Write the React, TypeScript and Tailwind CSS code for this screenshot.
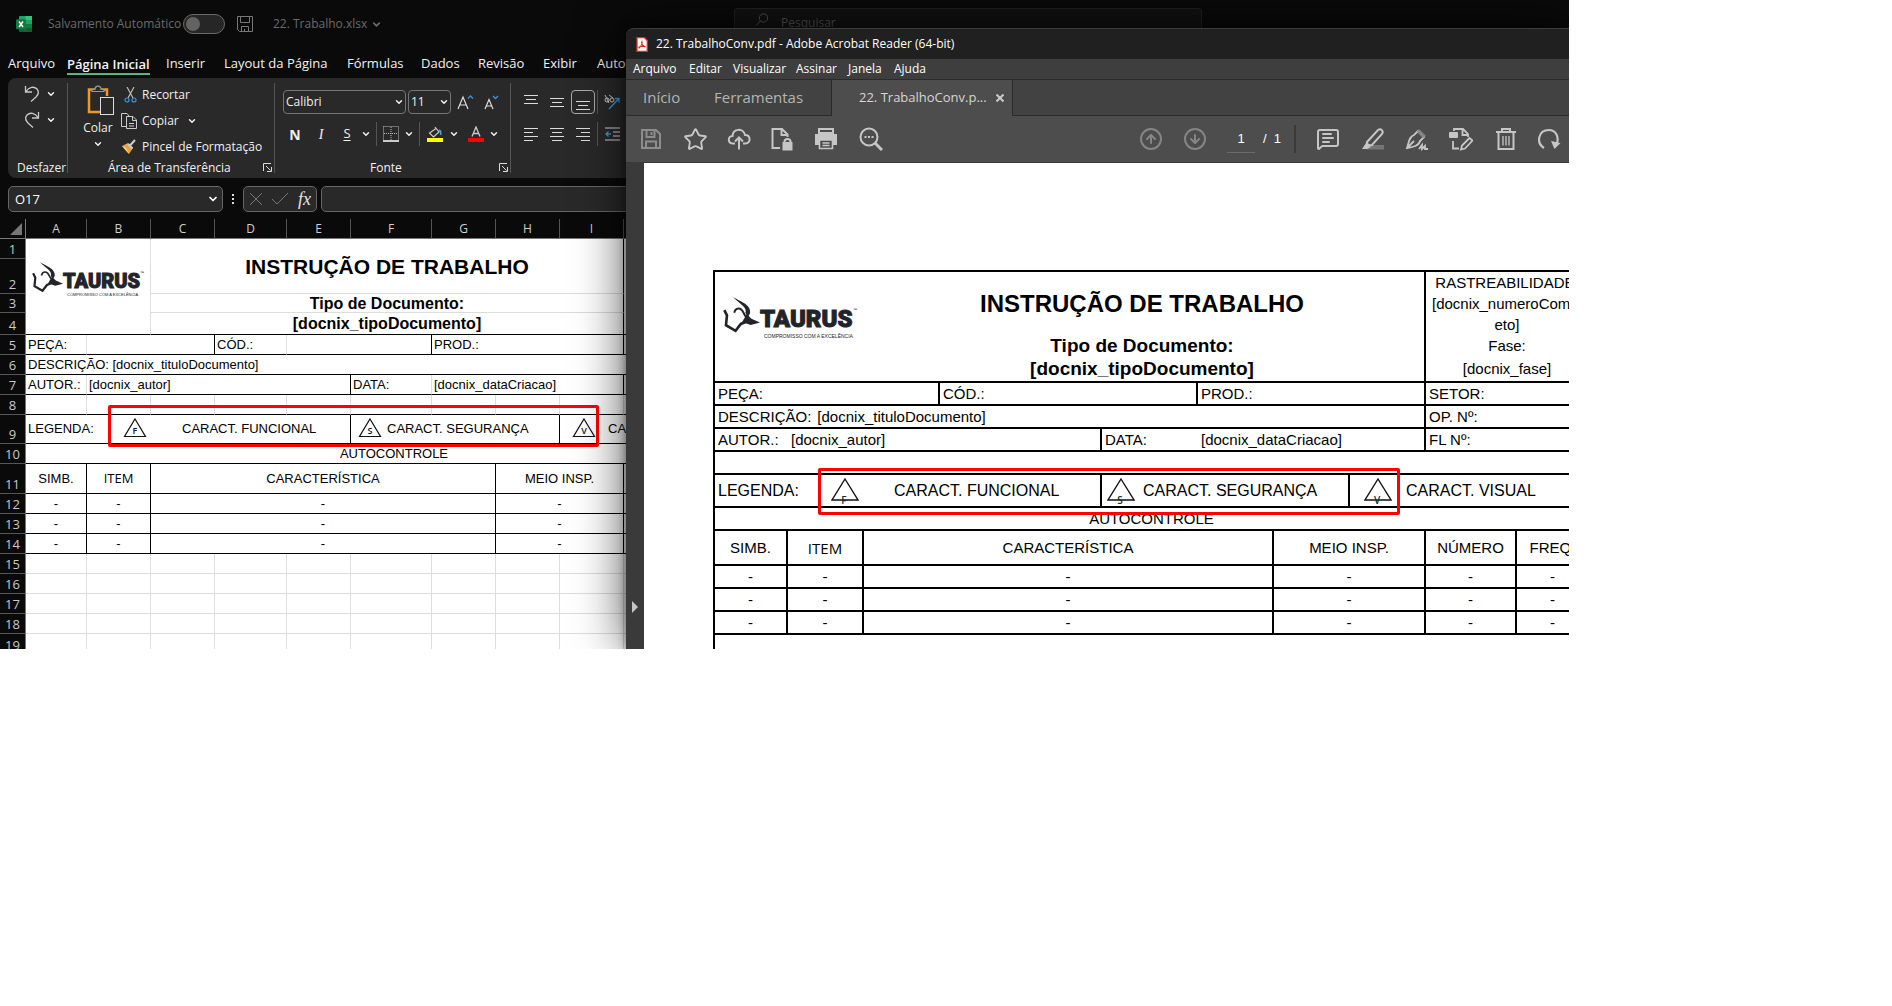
import React from "react";
import { ChevronDown, Star, MessageSquareText, ArrowUpCircle, ArrowDownCircle } from "lucide-react";

const light = "border-[#dcdcdc]";

function Chev({ size = 10, className = "" }: { size?: number; className?: string }) {
  return <ChevronDown size={size} strokeWidth={3.5} className={className} aria-hidden="true" />;
}

/* ---------- shared drawings ---------- */

function Bull({ className }: { className: string }) {
  return (
    <svg viewBox="0 0 112 114" className={className} fill="none" stroke="#23232a" aria-hidden="true">
      <path d="M28 1 C50 16 86 24 82 52 L76 62 L68 52 C74 34 54 26 28 1Z" fill="#23232a" stroke="none" />
      <path d="M34 50 C38 34 54 32 62 50 C66 62 78 72 96 78" strokeWidth="6" />
      <path d="M4 42 L12 58 L9 88 L38 105 L54 84 L76 75" strokeWidth="8" />
      <path d="M72 54 L86 68 L112 80 L84 87 L58 78Z" fill="#23232a" stroke="none" />
    </svg>
  );
}

function Logo({ large = false }: { large?: boolean }) {
  return (
    <div className={large ? "flex items-start pt-6 pl-2" : "flex items-start pl-[6px]"}>
      <Bull className={large ? "h-[38px] w-[37px] shrink-0" : "h-[33px] w-[31px] shrink-0"} />
      <div className={large ? "pt-[10px]" : "pt-[9px]"}>
        <div
          className={
            large
              ? "font-['Roboto'] text-[24px] leading-[26px] font-black text-[#23232a] [-webkit-text-stroke:1px_#23232a]"
              : "font-['Roboto'] text-[20px] leading-[22px] font-black text-[#23232a] [-webkit-text-stroke:1px_#23232a]"
          }
        >
          TAURUS
        </div>
        <div
          className={
            large
              ? "pl-1 text-[5px] leading-[8px] whitespace-nowrap text-[#23232a]"
              : "pl-1 text-[4px] leading-[6px] whitespace-nowrap text-[#23232a]"
          }
        >
          COMPROMISSO COM A EXCELÊNCIA
        </div>
      </div>
      <div className={large ? "pt-3 text-[4px] leading-[4px]" : "pt-[10px] text-[4px] leading-[4px]"}>™</div>
    </div>
  );
}

function Tri({ letter, low = false }: { letter: string; low?: boolean }) {
  return low ? (
    <svg viewBox="0 0 28 28" className="h-7 w-7 shrink-0" role="img" aria-label={letter}>
      <path d="M14 2 L27 23 H1Z" fill="none" stroke="#111" strokeWidth="1.4" />
      <text x="13" y="27" textAnchor="middle" fontSize="10" fontWeight="600" fontFamily="Open Sans, sans-serif" fill="#02302c">{letter}</text>
    </svg>
  ) : (
    <svg viewBox="0 0 24 22" className="h-[22px] w-6 shrink-0" role="img" aria-label={letter}>
      <path d="M12 2 L22.5 19.5 H1.5Z" fill="none" stroke="#111" strokeWidth="1.2" />
      <text x="12" y="17" textAnchor="middle" fontSize="9" fontWeight="600" fontFamily="Open Sans, sans-serif" fill="#111">{letter}</text>
    </svg>
  );
}

/* ---------- spreadsheet window ---------- */

function ExcelIcon() {
  return (
    <svg viewBox="0 0 16 16" className="h-4 w-4" aria-hidden="true">
      <rect x="3" y="0" width="13" height="16" rx="1" fill="#21a366" />
      <rect x="9.500" y="0" width="6.500" height="4" fill="#33c481" />
      <rect x="3" y="4" width="6.500" height="4" fill="#107c41" />
      <rect x="3" y="8" width="6.500" height="8" fill="#185c37" />
      <rect x="9.500" y="8" width="6.500" height="4" fill="#107c41" />
      <rect x="9.500" y="12" width="6.500" height="4" fill="#185c37" />
      <rect x="0" y="3.200" width="10" height="10" rx="1" fill="#107c41" />
      <path d="M3 5.500 L7 11 M7 5.500 L3 11" stroke="#fff" strokeWidth="1.500" />
    </svg>
  );
}

function TitleBar() {
  return (
    <div className="flex h-12 items-center pl-4 text-[12px] text-[#6a6a6a]">
      <ExcelIcon />
      <label htmlFor="autosave" className="ml-4 w-[135px] whitespace-nowrap">Salvamento Automático</label>
      <span className="relative flex h-5 w-[42px] items-center">
        <input id="autosave" type="checkbox" role="switch" className="h-5 w-[42px] appearance-none rounded-full border border-[#6a6a6a] bg-[#262626]" />
        <span className="pointer-events-none absolute left-[3px] h-[14px] w-[14px] rounded-full bg-[#636363]" />
      </span>
      <button aria-label="Salvar" className="ml-3">
        <svg viewBox="0 0 16 16" className="h-4 w-4" fill="none" stroke="#777" aria-hidden="true">
          <path d="M.5 .5 H15.5 V15.5 H2.500 L.5 13.500Z M3.500 .5 V6.500 H12.500 V.5 M4.500 15.500 V10.500 H11.500 V15.500 M7.500 13 V15.500" />
        </svg>
      </button>
      <button className="ml-5 flex w-[107px] shrink-0 items-center gap-1 whitespace-nowrap">
        22. Trabalho.xlsx
        <Chev size={11} className="shrink-0" />
      </button>
      <div className="ml-[354px] flex h-10 w-[468px] items-center gap-3 self-end rounded-t border border-[#222] bg-[#121212] pl-5 text-[#525252]">
        <svg viewBox="0 0 14 14" className="-mt-4 h-[14px] w-[14px]" fill="none" stroke="currentColor" aria-hidden="true">
          <circle cx="8.500" cy="5" r="4.200" /><path d="M5.300 8 L.8 12.800" />
        </svg>
        <label htmlFor="search" className="sr-only">Pesquisar</label>
        <input id="search" placeholder="Pesquisar" className="-mt-[10px] w-40 bg-transparent text-[12px] outline-none placeholder:text-[#525252]" />
      </div>
    </div>
  );
}

const tabs: [string, string][] = [
  ["Arquivo", "w-[59px]"],
  ["Página Inicial", "w-[99px] font-semibold"],
  ["Inserir", "w-[58px]"],
  ["Layout da Página", "w-[123px]"],
  ["Fórmulas", "w-[74px]"],
  ["Dados", "w-[57px]"],
  ["Revisão", "w-[65px]"],
  ["Exibir", "w-[54px]"],
  ["Automatizar", "w-[90px]"],
];

function Tabs() {
  return (
    <nav className="flex h-[30px] items-start pl-2 text-[13px] leading-[18px] text-[#f2f2f2]">
      {tabs.map(([t, w], i) => (
        <div key={t} className={"shrink-0 pt-[6px] " + w}>
          <button className={i === 1 ? "block h-[21px] border-b-2 border-[#57b586] whitespace-nowrap" : "block whitespace-nowrap"}>{t}</button>
        </div>
      ))}
    </nav>
  );
}

function Undo({ flip = false }: { flip?: boolean }) {
  return (
    <svg viewBox="0 0 16 18" className={flip ? "h-[18px] w-4 -scale-x-100" : "h-[18px] w-4"} fill="none" stroke="#c8c8c8" strokeWidth="1.300" aria-hidden="true">
      <path d="M1.500 1 V7 H8 M2 6.500 C5 2 10 1 13 4 C15.500 7 14.500 9.500 12 12 L7 16.500" />
    </svg>
  );
}

function Launcher() {
  return (
    <button aria-label="Mais opções" className="h-[9px] w-[9px]">
      <svg viewBox="0 0 9 9" className="h-[9px] w-[9px]" fill="none" stroke="#ddd" aria-hidden="true">
        <path d="M.5 8 V.5 H8 M3 3 L7.500 7.500 M8.500 4 V8.500 H4" />
      </svg>
    </button>
  );
}

function Lines({ rows, box = false }: { rows: [number, number, number][]; box?: boolean }) {
  return (
    <button aria-label="Alinhamento" className={box ? "flex h-6 w-6 items-center justify-center rounded border border-[#aaa]" : "flex h-6 w-6 items-center justify-center"}>
      <svg viewBox="0 0 14 16" className="h-4 w-[14px]" stroke="#ddd" aria-hidden="true">
        {rows.map(([x1, x2, y]) => <path key={y} d={`M${x1} ${y} H${x2}`} />)}
      </svg>
    </button>
  );
}

function Ribbon() {
  return (
    <div className="ml-2 flex h-[100px] overflow-hidden rounded-l-lg bg-[#292929] pt-[5px] pb-[5px] text-[12px] text-[#f0f0f0]">
      <section className="flex w-[60px] shrink-0 flex-col border-r border-[#555] pl-4">
        <button aria-label="Desfazer" className="mt-[2px] flex h-[18px] items-center gap-[6px]"><Undo /><Chev /></button>
        <button aria-label="Refazer" className="mt-2 flex h-[18px] items-center gap-[6px]"><Undo flip /><Chev /></button>
        <div className="mt-auto -ml-[7px] leading-[11px]">Desfazer</div>
      </section>

      <section className="flex w-[207px] shrink-0 flex-col border-r border-[#555]">
        <div className="flex pl-[14px]">
          <button className="flex w-8 flex-col items-center leading-4">
            <svg viewBox="0 0 28 31" className="mt-[2px] ml-[6px] h-[31px] w-7" fill="none" aria-hidden="true">
              <path d="M8 4.500 H2 V27 H13 M14 4.500 H20 V11" stroke="#e99a2b" strokeWidth="2.500" />
              <path d="M5 6.500 V4.500 H8 C8 0 14 0 14 4.500 H17 V6.500Z" stroke="#999" strokeWidth="1.200" fill="#292929" />
              <rect x="13.500" y="12.500" width="13" height="17" stroke="#ddd" fill="#292929" />
            </svg>
            <span className="mt-1">Colar</span>
            <Chev className="mt-[3px]" />
          </button>
          <div className="ml-[7px] flex flex-col gap-2">
            <button className="mt-[3px] flex h-[18px] items-center gap-[5px] whitespace-nowrap">
              <svg viewBox="0 0 16 16" className="h-4 w-4" fill="none" aria-hidden="true">
                <path d="M6 0 L12 11 M13 0 L7 11" stroke="#bbb" strokeWidth="1.200" />
                <circle cx="6" cy="13" r="2" stroke="#3a96dd" strokeWidth="1.200" /><circle cx="13" cy="13" r="2" stroke="#3a96dd" strokeWidth="1.200" />
              </svg>
              Recortar
            </button>
            <button className="flex h-[18px] items-center gap-[5px] whitespace-nowrap">
              <svg viewBox="0 0 16 16" className="h-4 w-4" fill="none" stroke="#ccc" aria-hidden="true">
                <path d="M5.500 13.500 H.5 V.5 H6 L8 3 M5.500 3.500 H12 L15.500 7 V15.500 H5.500Z M11.500 3.500 V7.500 H15.500 M8 10.500 H13 M8 13 H13" />
              </svg>
              <span className="w-10 text-left">Copiar</span><Chev />
            </button>
            <button className="flex h-[18px] items-center gap-[5px] whitespace-nowrap">
              <svg viewBox="0 0 16 16" className="h-4 w-4" aria-hidden="true">
                <path d="M1 7 L7 4 L12 9 L8 15Z" fill="#e8a33d" /><path d="M1 7 L5 9 L8 15Z" fill="#ffd894" />
                <path d="M7 5 L11.500 9.500 M9 6.500 L14 1" stroke="#ccc" strokeWidth="2" />
              </svg>
              Pincel de Formatação
            </button>
          </div>
        </div>
        <div className="mt-auto flex items-center pl-10 leading-[11px]"><span className="w-[155px]">Área de Transferência</span><Launcher /></div>
      </section>

      <section className="flex w-[236px] shrink-0 flex-col border-r border-[#555]">
        <div className="mt-[7px] flex h-6 pl-2">
          <span className="relative flex w-[123px] items-center">
            <select aria-label="Fonte" className="h-6 w-full appearance-none rounded border border-[#757575] pl-[2px]"><option>Calibri</option></select>
            <Chev className="pointer-events-none absolute right-[2px]" />
          </span>
          <span className="relative ml-[2px] flex w-[43px] items-center">
            <select aria-label="Tamanho" className="h-6 w-full appearance-none rounded border border-[#757575] pl-[2px]"><option>11</option></select>
            <Chev className="pointer-events-none absolute right-[2px]" />
          </span>
          <button aria-label="Aumentar fonte" className="ml-[6px] w-[17px]">
            <svg viewBox="0 0 17 16" className="h-4 w-[17px]" fill="none" stroke="#ddd" aria-hidden="true"><path d="M1 15 L6 3 L11 15 M3 11 H9" strokeWidth="1.200" /><path d="M11 4.500 L13.500 2 L16 4.500" stroke="#3a96dd" strokeWidth="1.300" /></svg>
          </button>
          <button aria-label="Diminuir fonte" className="ml-[9px] w-[17px]">
            <svg viewBox="0 0 17 16" className="h-4 w-[17px]" fill="none" stroke="#ddd" aria-hidden="true"><path d="M2 15 L6 5.500 L10 15 M3.500 12 H8.500" strokeWidth="1.200" /><path d="M10 2 L12.500 4.500 L15 2" stroke="#3a96dd" strokeWidth="1.300" /></svg>
          </button>
        </div>
        <div className="mt-2 flex h-6 items-center pl-[7px]">
          <button className="w-[26px] text-[14px] font-bold">N</button>
          <button className="w-[26px] font-['Liberation_Serif'] text-[14px] italic">I</button>
          <button className="w-[26px] text-[13px] underline underline-offset-2">S</button>
          <button aria-label="Sublinhado" className="flex w-3 justify-center"><Chev /></button>
          <span className="mr-1 ml-1 h-6 w-px bg-[#555]" />
          <button aria-label="Bordas" className="flex w-5 justify-center">
            <svg viewBox="0 0 16 16" className="h-4 w-4" fill="none" stroke="#bbb" aria-hidden="true"><path d="M.5 .5 H15.500 V14 M.5 .5 V14 M8 1 V14 M1 7.500 H15" strokeDasharray="1 1" /><path d="M0 15 H16" stroke="#fff" strokeWidth="1.500" /></svg>
          </button>
          <button aria-label="Mais bordas" className="flex w-4 justify-center"><Chev /></button>
          <span className="mr-1 ml-[2px] h-6 w-px bg-[#555]" />
          <button aria-label="Cor de preenchimento" className="flex w-[22px] justify-center">
            <svg viewBox="0 0 16 16" className="h-4 w-4" fill="none" aria-hidden="true"><path d="M8 1 L12 6 L6.500 11 L2.500 7 L9 2.500" stroke="#ccc" strokeWidth="1.200" /><path d="M12 4 Q14.500 5 13.500 9" stroke="#4aa0e0" strokeWidth="1.600" /><path d="M0 12 H16 V16 H0Z" fill="#ffff00" /></svg>
          </button>
          <button aria-label="Mais cores de preenchimento" className="flex w-4 justify-center"><Chev /></button>
          <button aria-label="Cor da fonte" className="ml-[3px] flex w-[22px] justify-center">
            <svg viewBox="0 0 16 16" className="h-4 w-4" fill="none" aria-hidden="true"><path d="M4 10.500 L8 1 L12 10.500 M5.500 7.500 H10.500" stroke="#ccc" strokeWidth="1.300" /><path d="M0 12 H16 V16 H0Z" fill="#ff0000" /></svg>
          </button>
          <button aria-label="Mais cores da fonte" className="flex w-[14px] justify-center"><Chev /></button>
        </div>
        <div className="mt-auto flex items-center pl-[95px] leading-[11px]"><span className="w-[129px]">Fonte</span><Launcher /></div>
      </section>

      <section className="flex shrink-0 flex-col gap-2 pt-[7px] pl-2">
        <div className="flex items-center gap-[2px]">
          <Lines rows={[[0, 14, 1.5], [2, 12, 5.5], [0, 14, 9.5]]} />
          <Lines rows={[[0, 14, 4.5], [2, 12, 8.5], [0, 14, 12.5]]} />
          <Lines box rows={[[0, 14, 7.5], [2, 12, 11.5], [0, 14, 15.5]]} />
          <span className="h-6 w-px bg-[#555]" />
          <button aria-label="Orientação" className="flex items-center gap-1 pl-1">
            <svg viewBox="0 0 16 16" className="h-4 w-4" fill="none" aria-hidden="true"><path d="M5 15 L15 4.500 M11 4.500 H15 V8.500" stroke="#3a96dd" strokeWidth="1.300" /><circle cx="3" cy="6" r="2" stroke="#ccc" /><circle cx="8" cy="6" r="2" stroke="#ccc" /><path d="M1 1 L5 9 M5 1 L9 4" stroke="#ccc" /></svg>
            <Chev />
          </button>
        </div>
        <div className="flex items-center gap-[2px]">
          <Lines rows={[[0, 14, 2.5], [0, 9, 6.5], [0, 14, 10.5], [0, 9, 14.5]]} />
          <Lines rows={[[0, 14, 2.5], [2, 12, 6.5], [0, 14, 10.5], [2, 12, 14.5]]} />
          <Lines rows={[[0, 14, 2.5], [5, 14, 6.5], [0, 14, 10.5], [5, 14, 14.5]]} />
          <span className="h-6 w-px bg-[#555]" />
          <button aria-label="Diminuir recuo" className="pl-[5px]">
            <svg viewBox="0 0 15 14" className="h-[14px] w-[15px]" fill="none" stroke="#ddd" aria-hidden="true"><path d="M0 1 H15 M8 5 H15 M8 9 H15 M0 13 H15" /><path d="M6 7 H1 M3.500 4.500 L1 7 L3.500 9.500" stroke="#3a96dd" strokeWidth="1.300" /></svg>
          </button>
        </div>
      </section>
    </div>
  );
}

function FormulaBar() {
  return (
    <div className="mt-2 flex h-[26px] items-center pl-2">
      <span className="relative flex w-[215px] items-center">
        <input aria-label="Caixa de nome" defaultValue="O17" className="h-[26px] w-full rounded-[5px] border border-[#666] bg-[#292929] pl-[6px] text-[13px] text-white" />
        <Chev className="absolute right-1 text-white" size={12} />
      </span>
      <span className="ml-[9px] flex w-[11px] flex-col gap-[2px]">
        <i className="h-[2px] w-[2px] bg-[#ddd]" /><i className="h-[2px] w-[2px] bg-[#ddd]" /><i className="h-[2px] w-[2px] bg-[#ddd]" />
      </span>
      <div className="flex h-[26px] w-[74px] shrink-0 items-center gap-[10px] rounded-[5px] border border-[#666] bg-[#292929] pl-[6px]">
        <button aria-label="Cancelar"><svg viewBox="0 0 12 12" className="h-3 w-3" stroke="#777" aria-hidden="true"><path d="M0 0 L12 12 M12 0 L0 12" /></svg></button>
        <button aria-label="Inserir"><svg viewBox="0 0 16 12" className="h-3 w-4" fill="none" stroke="#777" aria-hidden="true"><path d="M0 6 L5 11 L16 0" /></svg></button>
        <button className="font-['Liberation_Serif'] text-[18px] leading-5 text-[#e4e4e4] italic">fx</button>
      </div>
      <input aria-label="Barra de fórmulas" className="ml-1 h-[26px] min-w-0 flex-1 rounded-l-[5px] border border-[#666] bg-[#292929]" />
    </div>
  );
}

function RowHead({ n }: { n: number }) {
  return <th scope="row" className="border-r border-b border-b-[#555] border-r-[#777] bg-[#0a0a0a] p-0 pb-px text-center align-bottom font-['Open_Sans'] text-[13px] leading-[16px] font-normal text-[#c9c9c9]">{n}</th>;
}

const blackB = "border-b border-b-black";
const both = "border-r border-b border-black";
const softR = "border-r border-r-[#dcdcdc] border-b border-b-black";

function Sheet() {
  return (
    <div className="mt-[7px] overflow-hidden">
      <table className="w-[763px] table-fixed border-separate border-spacing-0 bg-white font-['Liberation_Sans'] text-[13px] leading-[15px] text-black">
        <colgroup>
          <col className="w-[26px]" /><col className="w-[61px]" /><col className="w-16" /><col className="w-16" /><col className="w-[72px]" /><col className="w-16" />
          <col className="w-[81px]" /><col className="w-16" /><col className="w-16" /><col className="w-16" /><col className="w-16" /><col className="w-[75px]" />
        </colgroup>
        <thead>
          <tr className="h-5 bg-[#0a0a0a]">
            <th aria-label="Selecionar tudo" className="border-r border-b border-[#777] p-0">
              <svg viewBox="0 0 12 12" className="ml-[10px] h-3 w-3" aria-hidden="true"><path d="M12 0 V12 H0Z" fill="#777" /></svg>
            </th>
            {["A", "B", "C", "D", "E", "F", "G", "H", "I", "J", "K"].map((c) => (
              <th key={c} scope="col" className="border-r border-b border-r-[#555] border-b-[#777] p-0 font-['Open_Sans'] text-[12px] font-normal text-[#d0d0d0]">{c}</th>
            ))}
          </tr>
        </thead>
        <tbody className="[&_td]:overflow-hidden [&_td]:p-0 [&_td]:whitespace-nowrap">
          <tr className="h-5">
            <RowHead n={1} />
            <td colSpan={2} rowSpan={4} className="border-r border-b border-r-[#dcdcdc] border-b-black"><div className="-mt-[14px]"><Logo /></div></td>
            <td colSpan={7} rowSpan={2} className="border-r border-b border-r-black border-b-[#dcdcdc] text-center text-[21px] font-bold">INSTRUÇÃO DE TRABALHO</td>
            <td colSpan={2} rowSpan={4} className={both} />
          </tr>
          <tr className="h-[35px]"><RowHead n={2} /></tr>
          <tr className="h-[19px]"><RowHead n={3} /><td colSpan={7} className="border-r border-b border-r-black border-b-[#dcdcdc] text-center text-[16px] font-bold">Tipo de Documento:</td></tr>
          <tr className="h-[22px]"><RowHead n={4} /><td colSpan={7} className={both + " text-center text-[16px] leading-[18px] font-bold"}>[docnix_tipoDocumento]</td></tr>
          <tr className="h-5">
            <RowHead n={5} />
            <td className={softR}><div className="pl-[2px]">PEÇA:</div></td><td colSpan={2} className={both} />
            <td className={softR}><div className="pl-[2px]">CÓD.:</div></td><td colSpan={2} className={both} />
            <td colSpan={3} className={both}><div className="pl-[2px]">PROD.:</div></td><td colSpan={2} className={both} />
          </tr>
          <tr className="h-5"><RowHead n={6} /><td colSpan={9} className={blackB}><div className="pl-[2px]">DESCRIÇÃO: [docnix_tituloDocumento]</div></td><td colSpan={2} className={both} /></tr>
          <tr className="h-5">
            <RowHead n={7} />
            <td className={softR}><div className="pl-[2px]">AUTOR.:</div></td><td colSpan={4} className={both}><div className="pl-[2px]">[docnix_autor]</div></td>
            <td className={softR}><div className="pl-[2px]">DATA:</div></td><td colSpan={3} className={both}><div className="pl-[2px]">[docnix_dataCriacao]</div></td><td colSpan={2} className={both} />
          </tr>
          <tr className="h-5"><RowHead n={8} />{Array.from({ length: 11 }, (_, i) => <td key={i} className={softR} />)}</tr>
          <tr className="h-[29px]">
            <RowHead n={9} />
            <td colSpan={5} className={both}>
              <div className="flex items-center pb-[2px] pl-[2px]"><span className="w-[95px]">LEGENDA:</span><Tri letter="F" /><span className="ml-[35px]">CARACT. FUNCIONAL</span></div>
            </td>
            <td colSpan={3} className={both}><div className="flex items-center gap-[5px] pb-[2px] pl-[7px]"><Tri letter="S" />CARACT. SEGURANÇA</div></td>
            <td colSpan={3} className={both}><div className="flex items-center gap-3 pb-[2px] pl-3"><Tri letter="V" />CARACT. VISUAL</div></td>
          </tr>
          <tr className="h-5"><RowHead n={10} /><td colSpan={11} className={both + " text-center"}>AUTOCONTROLE</td></tr>
          <tr className="h-[30px] text-center">
            <RowHead n={11} />
            <td className={both}>SIMB.</td><td className={both + " font-['Open_Sans'] text-[13px]"}>ITEM</td><td colSpan={5} className={both}>CARACTERÍSTICA</td><td colSpan={2} className={both}>MEIO INSP.</td><td className={both}>NÚMERO</td><td className={both}>FREQ.</td>
          </tr>
          {[12, 13, 14].map((n) => (
            <tr key={n} className="h-5 text-center"><RowHead n={n} /><td className={both}>-</td><td className={both}>-</td><td colSpan={5} className={both}>-</td><td colSpan={2} className={both}>-</td><td className={both}>-</td><td className={both}>-</td></tr>
          ))}
          {[15, 16, 17, 18].map((n) => (
            <tr key={n} className="h-5"><RowHead n={n} />{Array.from({ length: 11 }, (_, i) => <td key={i} className={"border-r border-b " + light} />)}</tr>
          ))}
          <tr className="h-[15px]">
            <th scope="row" className="border-r border-[#777] bg-[#0a0a0a] p-0 font-['Open_Sans'] text-[13px] font-normal text-[#c9c9c9]"><div className="h-[15px] overflow-hidden pt-[3px] leading-[16px]">19</div></th>
            {Array.from({ length: 11 }, (_, i) => <td key={i} className={"border-r " + light} />)}
          </tr>
        </tbody>
      </table>
    </div>
  );
}

/* ---------- reader window ---------- */

function PdfIcon() {
  return (
    <svg viewBox="0 0 12 15" className="h-[15px] w-3" aria-hidden="true">
      <path d="M1 .7 H8.500 L11.300 3.500 V14.300 H1Z" fill="#fff" stroke="#e8291c" strokeWidth="1.300" />
      <path d="M6 4.500 C7 7 5 9 3 11 C2 10 4 9 9 9.500 C10 10.500 6 9 5.500 5.500Z" fill="none" stroke="#e8291c" strokeWidth="1.100" />
    </svg>
  );
}

function Tool({ label, w = "w-11", children }: { label: string; w?: string; children: React.ReactNode }) {
  return <button aria-label={label} className={"flex h-9 shrink-0 items-center justify-center " + w}>{children}</button>;
}

function ReaderToolbar() {
  return (
    <div className="flex h-[46px] items-center overflow-hidden bg-[#4d4d4d] pl-1 text-[#c6c6c6]">
      <Tool label="Salvar" w="w-[42px]">
        <svg viewBox="0 0 20 20" className="h-5 w-5" fill="none" stroke="#8d8d8d" strokeWidth="2" aria-hidden="true"><path d="M1 1 H15 L19 5 V19 H1Z M5.500 1 V8 H13.500 V1 M5 19 V12.500 H15 V19 M10.500 3 V6" /></svg>
      </Tool>
      <Tool label="Favorito" w="w-[46px]"><Star size={25} strokeWidth={1.8} /></Tool>
      <Tool label="Enviar" w="w-[42px]">
        <svg viewBox="0 0 24 22" className="h-[22px] w-6" fill="none" stroke="currentColor" strokeWidth="2" aria-hidden="true"><path d="M8 15.500 H6 C.5 15.500 .5 8 5.500 8 C6 0 16.500 0 18 7 C24 7 24 15.500 18.500 15.500 H16 M12 21.500 V9.500 M8 13.500 L12 9.500 L16 13.500" /></svg>
      </Tool>
      <Tool label="Proteger">
        <svg viewBox="0 0 22 24" className="h-6 w-[22px]" fill="none" stroke="currentColor" strokeWidth="2" aria-hidden="true"><path d="M9 21 H1.500 V2 H11 L16.500 7.500 V10 M10.500 2 V8 H16.500" /><path d="M11.500 15 H21.500 V23.500 H11.500Z" fill="currentColor" stroke="none" /><path d="M13.500 16 V14.500 C13.500 11 19.500 11 19.500 14.500 V16" /></svg>
      </Tool>
      <Tool label="Imprimir">
        <svg viewBox="0 0 22 22" className="h-[22px] w-[22px]" fill="none" aria-hidden="true"><path d="M4 1 H18 V5 H4Z" stroke="currentColor" strokeWidth="2" /><path d="M0 6 H22 V17 H18 V12 H4 V17 H0Z" fill="currentColor" /><path d="M4.500 12 V20.500 H17.500 V12Z M7.500 15 H14.500 M7.500 17.500 H14.500" stroke="currentColor" strokeWidth="1.600" /></svg>
      </Tool>
      <Tool label="Localizar" w="w-[46px]">
        <svg viewBox="0 0 24 24" className="h-6 w-6" fill="none" stroke="currentColor" strokeWidth="2" aria-hidden="true"><circle cx="10" cy="10" r="8.500" /><path d="M16 16 L23 23" strokeWidth="3" /><path d="M5.500 10 H14.500" strokeDasharray="2 1.500" /></svg>
      </Tool>
      <span className="w-[235px] shrink-0" />
      <Tool label="Página anterior" ><ArrowUpCircle size={24} color="#858585" /></Tool>
      <Tool label="Próxima página"><ArrowDownCircle size={24} color="#858585" /></Tool>
      <input aria-label="Página" defaultValue="1" className="ml-[10px] h-7 w-7 border-b border-[#6b6b6b] text-center font-['Liberation_Sans'] text-[13px] text-white" />
      <span className="ml-2 w-9 font-['Liberation_Sans'] text-[13px] whitespace-pre text-white">/  1</span>
      <span className="mr-[9px] h-7 w-[2px] shrink-0 bg-[#3a3a3a]" />
      <Tool label="Comentar" w="w-[46px]"><MessageSquareText size={24} strokeWidth={2} /></Tool>
      <Tool label="Realçar">
        <svg viewBox="0 0 24 24" className="h-6 w-6" fill="none" aria-hidden="true"><path d="M10 18 H23 V22.500 H5Z" fill="#757575" /><path d="M6 15 L17 3 C20 1 23 4 21 7 L11 18 C9 19 5 17 6 15Z" stroke="currentColor" strokeWidth="2" /><path d="M5 16 L10 20 L6 22 H1Z" fill="currentColor" /></svg>
      </Tool>
      <Tool label="Assinar">
        <svg viewBox="0 0 24 24" className="h-6 w-6" fill="none" stroke="currentColor" strokeWidth="1.800" aria-hidden="true"><path d="M2 21 C4 15 4 10 9 8 L13 4 L19 10 L15 14 C14 19 8 20 2 21Z M2 21 L9 14" /><path d="M14 2 L21 9 L18 11 L12 5Z" fill="#858585" stroke="none" /><path d="M14 22 L17 18 L17 22 L20 19 L20 22 H23" /></svg>
      </Tool>
      <Tool label="Editar">
        <svg viewBox="0 0 24 24" className="h-6 w-6" fill="none" stroke="currentColor" strokeWidth="1.800" aria-hidden="true"><path d="M5 4 V2 H14 L19 7 V10 M13.500 2 V8 H19 M4 14 V21.500 H10" /><rect x="0" y="5" width="9" height="6" rx="1" fill="currentColor" stroke="none" /><path d="M12 22.500 L13 18.500 L20.500 11 L23.500 13.500 L16 21.500Z" /></svg>
      </Tool>
      <Tool label="Excluir" w="w-[46px]">
        <svg viewBox="0 0 22 24" className="h-6 w-[22px]" fill="none" stroke="currentColor" strokeWidth="2" aria-hidden="true"><path d="M1 5 H21 M7 4.500 V2 H15 V4.500 M3.500 5 V22 H18.500 V5" /><path d="M8 9 V18.500 M11 9 V18.500 M14 9 V18.500" strokeWidth="1.300" /></svg>
      </Tool>
      <Tool label="Girar" w="w-10">
        <svg viewBox="0 0 24 24" className="h-6 w-6" fill="none" stroke="currentColor" strokeWidth="2.200" aria-hidden="true"><path d="M7 21 C-1 16 1 3 12 3 C19 3 22 10 20 16" /><path d="M14 14 L23.500 16 L17.500 22Z" fill="currentColor" stroke="none" /></svg>
      </Tool>
    </div>
  );
}

const pb = "border-r-2 border-b-2 border-black";

function PdfPage() {
  return (
    <div className="relative min-w-0 flex-1 overflow-hidden bg-white pt-[107px] pl-[69px] font-['Liberation_Sans'] text-[15px] leading-[18px] text-black">
      <table className="w-[877px] table-fixed border-separate border-spacing-0 border-t-2 border-l-2 border-black">
        <colgroup>
          <col className="w-[73px]" /><col className="w-[76px]" /><col className="w-[76px]" /><col className="w-[162px]" /><col className="w-24" /><col className="w-[76px]" />
          <col className="w-[76px]" /><col className="w-[76px]" /><col className="w-[91px]" /><col className="w-[73px]" />
        </colgroup>
        <tbody className="[&_td]:p-0 [&_td]:whitespace-nowrap">
          <tr className="h-[111px] align-top">
            <td colSpan={8} className={pb}>
              <div className="flex h-[109px] overflow-hidden">
                <div className="w-[149px] shrink-0"><Logo large /></div>
                <div className="flex flex-1 flex-col pt-[18px] pr-1 text-center font-bold">
                  <span className="h-[44px] text-[24px] leading-[28px]">INSTRUÇÃO DE TRABALHO</span>
                  <span className="text-[19px] leading-[23px]">Tipo de Documento:</span>
                  <span className="text-[19px] leading-[23px]">[docnix_tipoDocumento]</span>
                </div>
              </div>
            </td>
            <td colSpan={2} className={pb}>
              <div className="flex flex-col text-center leading-[21px]">
                <span>RASTREABILIDADE:</span><span>[docnix_numeroCompl</span><span>eto]</span><span>Fase:</span><span className="pt-[2px]">[docnix_fase]</span>
              </div>
            </td>
          </tr>
          <tr className="h-[23px]">
            <td colSpan={3} className={pb}><div className="pl-[3px]">PEÇA:</div></td><td colSpan={2} className={pb}><div className="pl-[3px]">CÓD.:</div></td><td colSpan={3} className={pb}><div className="pl-[3px]">PROD.:</div></td><td colSpan={2} className={pb}><div className="pl-[3px]">SETOR:</div></td>
          </tr>
          <tr className="h-[23px]"><td colSpan={8} className={pb}><div className="flex gap-[6px] pl-[3px]"><span>DESCRIÇÃO:</span><span>[docnix_tituloDocumento]</span></div></td><td colSpan={2} className={pb}><div className="pl-[3px]">OP. Nº:</div></td></tr>
          <tr className="h-[23px]">
            <td colSpan={4} className={pb}><div className="flex pl-[3px]"><span className="w-[73px]">AUTOR.:</span>[docnix_autor]</div></td>
            <td colSpan={4} className={pb}><div className="flex pl-[3px]"><span className="w-24">DATA:</span>[docnix_dataCriacao]</div></td>
            <td colSpan={2} className={pb}><div className="pl-[3px]">FL Nº:</div></td>
          </tr>
          <tr className="h-[23px]"><td colSpan={10} className={pb} /></tr>
          <tr className="h-[33px] text-[16px]">
            <td colSpan={4} className={pb}><div className="flex items-center pl-[3px]"><span className="w-[113px]">LEGENDA:</span><Tri low letter="F" /><span className="ml-[35px]">CARACT. FUNCIONAL</span></div></td>
            <td colSpan={3} className={pb}><div className="flex items-center gap-2 pl-[5px]"><Tri low letter="S" />CARACT. SEGURANÇA</div></td>
            <td colSpan={3} className={pb}><div className="flex items-center gap-[14px] pl-[14px]"><Tri low letter="V" />CARACT. VISUAL</div></td>
          </tr>
          <tr className="h-[23px]"><td colSpan={10} className={pb + " text-center"}>AUTOCONTROLE</td></tr>
          <tr className="h-[35px] text-center">
            <td className={pb}>SIMB.</td><td className={pb + " font-['Open_Sans'] text-[15px]"}>ITEM</td><td colSpan={4} className={pb}>CARACTERÍSTICA</td><td colSpan={2} className={pb}>MEIO INSP.</td><td className={pb}>NÚMERO</td><td className={pb}>FREQ.</td>
          </tr>
          {[0, 1, 2].map((n) => (
            <tr key={n} className="h-[23px] text-center"><td className={pb}>-</td><td className={pb}>-</td><td colSpan={4} className={pb}>-</td><td colSpan={2} className={pb}>-</td><td className={pb}>-</td><td className={pb}>-</td></tr>
          ))}
          <tr className="h-[14px]"><td colSpan={10} className="border-r-2 border-black" /></tr>
        </tbody>
      </table>
      <div className="absolute top-[305px] left-[174px] h-[47px] w-[582px] rounded-[2px] border-[3px] border-[#ff0000]" />
    </div>
  );
}

function Reader() {
  return (
    <div className="absolute inset-y-0 top-[28px] right-0 left-[626px] flex flex-col overflow-hidden rounded-tl-lg border-t border-[#3c3c3c] bg-[#4d4d4d] shadow-[0_0_8px_rgba(0,0,0,0.4),0_0_50px_rgba(0,0,0,0.7)]">
      <div className="flex h-[30px] items-center bg-[#202020] pl-[10px] text-[12px] text-white"><PdfIcon /><span className="ml-2">22. TrabalhoConv.pdf - Adobe Acrobat Reader (64-bit)</span></div>
      <nav className="flex h-5 items-center bg-[#3e3e3e] pl-[7px] text-[12px] text-white">
        <button className="w-14 text-left">Arquivo</button><button className="w-11 text-left">Editar</button><button className="w-[63px] text-left">Visualizar</button>
        <button className="w-[52px] text-left">Assinar</button><button className="w-[46px] text-left">Janela</button><button>Ajuda</button>
      </nav>
      <div className="flex h-[37px] border-t border-[#2b2b2b] bg-[#424242] text-[#b4b4b4]">
        <div className="flex w-[206px] shrink-0 border-r border-b border-[#2b2b2b] pl-[17px] text-[15px]"><button className="w-[71px] text-left">Início</button><button>Ferramentas</button></div>
        <div className="flex w-[180px] shrink-0 items-center bg-[#4d4d4d] pl-[27px] text-[13px] text-[#d6d6d6]"><button className="w-[137px] text-left whitespace-nowrap">22. TrabalhoConv.p...</button>
          <button aria-label="Fechar"><svg viewBox="0 0 8 8" className="h-2 w-2" stroke="#ccc" strokeWidth="2" aria-hidden="true"><path d="M.5 .5 L7.500 7.500 M7.500 .5 L.5 7.500" /></svg></button>
        </div>
        <div className="flex-1 border-b border-l border-[#2b2b2b]" />
      </div>
      <ReaderToolbar />
      <div className="flex flex-1 border-t border-[#3a3a3a]">
        <button aria-label="Abrir painel" className="flex w-[18px] items-end bg-[#3a3a3a] pb-9 pl-[6px]">
          <svg viewBox="0 0 6 12" className="h-3 w-[6px]" aria-hidden="true"><path d="M0 0 L6 6 L0 12Z" fill="#c4c4c4" /></svg>
        </button>
        <PdfPage />
      </div>
    </div>
  );
}

export default function App() {
  return (
    <div className="min-h-screen bg-white font-['Open_Sans',sans-serif]">
      <main className="relative mr-[323px] overflow-hidden bg-[#0a0a0a]">
        <TitleBar />
        <Tabs />
        <Ribbon />
        <FormulaBar />
        <Sheet />
        <div className="absolute top-[405px] left-[108px] h-[42px] w-[491px] rounded-[2px] border-[3px] border-[#ff0000]" />
        <Reader />
      </main>
    </div>
  );
}
